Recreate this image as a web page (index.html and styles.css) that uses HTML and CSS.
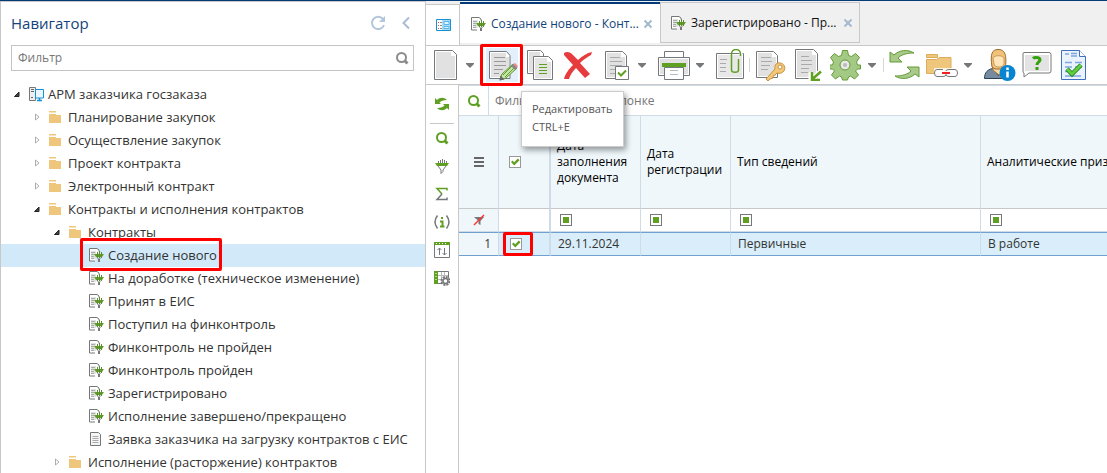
FILE: index.html
```html
<!DOCTYPE html>
<html lang="ru">
<head>
<meta charset="utf-8">
<title>АРМ заказчика госзаказа</title>
<link rel="stylesheet" href="styles.css">
</head>
<body>
<svg class="sprite" aria-hidden="true">
  <symbol id="folder" viewBox="0 0 14 14"><path d="M1 1h7v1.500H1zM1 4h7v1h5v8H1z" fill="#efc77c"/></symbol>
  <symbol id="doc-filter" viewBox="0 0 16 16">
    <path d="M11 4.500V3L9 1.500H1.500v12.500H7" fill="#fff" stroke="#75787b"/>
    <path d="M3 4h5v8H3z" fill="#e2e2e2"/>
    <path d="M3 5.500h4M3 7.500h3M3 9.500h3M3 11.500h3" stroke="#aaa"/>
    <path d="M6 7h10l-2 3H8z" fill="#5fa022"/>
    <path d="M9.500 5v6M11.500 4v7M13.500 5v6" stroke="#5b8b33"/>
    <path d="M9 10.500l1.500 1.500v3M13 10.500L11.500 12v3" fill="none" stroke="#777"/>
  </symbol>
  <symbol id="doc-small" viewBox="0 0 16 16"><path d="M2.500 1.500h8l2 2v11h-10z" fill="#f5f5f5" stroke="#75787b"/><path d="M4.500 5.500h6M4.500 7.500h6M4.500 9.500h6M4.500 11.500h6" stroke="#aaa"/></symbol>
  <symbol id="station" viewBox="0 0 16 16"><path d="M1.500 1.500h6v13h-6z" fill="#eee" stroke="#75787b"/><path d="M3 3.500h3M3 5.500h3M3 11.500h2" stroke="#666"/><path d="M7.500 3.500h8v8.500h-8z" fill="#eaf7ff" stroke="#1590d4"/><path d="M9 14.500h5M11.500 12v2" stroke="#1590d4" stroke-width="1.500"/></symbol>
  <symbol id="open" viewBox="0 0 8 8"><path d="M6 2v4.500H1.500z" fill="#444" stroke="#222"/></symbol>
  <symbol id="shut" viewBox="0 0 8 8"><path d="M2.500 1v6l3.500-3z" fill="#fff" stroke="#999" stroke-width=".8"/></symbol>
  <symbol id="lens" viewBox="0 0 16 16"><circle cx="7.500" cy="7.500" r="4.500" fill="none" stroke="currentColor" stroke-width="2"/><path d="M10.500 10.500l3 3" stroke="currentColor" stroke-width="3"/></symbol>
  <symbol id="cross" viewBox="0 0 10 10"><path d="M1.500 1.500l7 7M8.500 1.500l-7 7" stroke="#a3b9d0" stroke-width="2"/></symbol>
  <symbol id="caret" viewBox="0 0 10 10"><path d="M1 3h8v1L5 8 1 4z" fill="#75787b"/></symbol>
  <symbol id="sync" viewBox="0 0 32 32"><path d="M2 3v10h12l-4-4c3-3 8-5 16-5C20 0 11 1 6 6zM31 28V18H19l4 4c-3 3-8 5-16 5 6 4 15 3 20-2z" fill="#a8c98a" stroke="#639c35"/></symbol>
  <symbol id="sheet" viewBox="0 0 32 32"><path d="M1.500 1.500h18l4 4v25h-22z" fill="#fff" stroke="#75787b"/><path d="M3 3h15v4h4v22H3z" fill="#e1e1e1"/></symbol>
  <symbol id="i-edit" viewBox="0 0 32 32"><path d="M3.500 2.500h17l3.500 4v23H3.500z" fill="#fff" stroke="#75787b"/><path d="M5 4h15v4h3v20H5z" fill="#e1e1e1"/><path d="M8 8.500h11M8 12.500h12M8 16.500h12M8 20.500h9M8 24.500h5" stroke="#999"/><path d="M14 31l2-6L27 15l4 4-11 10z" fill="#c7e5a8" stroke="#5e9c2e"/><path d="M17 26l9-9M19 28l9-9" stroke="#5e9c2e"/><path d="M13.500 31.500l1-5 4 4z" fill="#666"/><path d="M25 17l2-2 4 4-2 2z" fill="#888"/><path d="M27 15l2-1 3 3-1 2z" fill="#f18a96"/></symbol>
  <symbol id="i-copy" viewBox="0 0 32 32"><path d="M3.500 1.500h13l3 3v20h-16z" fill="#fff" stroke="#75787b"/><path d="M5 3h11v20H5z" fill="#e1e1e1"/><path d="M9.500 7.500h15l4 4v19h-19z" fill="#fff" stroke="#75787b"/><path d="M11 9h12v4h4v16H11z" fill="#e4e4e4"/><path d="M15 15.500h8M15 18.500h8M15 21.500h8M15 24.500h8" stroke="#5fa022"/></symbol>
  <symbol id="i-delete" viewBox="0 0 32 32"><path d="M2 4c3-2 6-1 8 1l6 6c4-4 9-7 14-8l-1 3c-4 2-8 5-11 8l10 11-5 4-9-10c-3 3-6 7-7 11H2c1-5 5-10 9-14L2 6z" fill="#e73c3e"/></symbol>
  <symbol id="i-check" viewBox="0 0 32 32"><path d="M5.500 2.500h17l4 4v23h-21z" fill="#fff" stroke="#75787b"/><path d="M7 4h14v4h4v20H7z" fill="#e1e1e1"/><path d="M10 8.500h10M10 12.500h12M10 16.500h12M10 20.500h6M10 24.500h5" stroke="#aaa"/><path d="M15.500 17.500h13v13h-13z" fill="#fff" stroke="#75787b"/><path d="M18 23.500l3 3 5-5" fill="none" stroke="#5fa022" stroke-width="2"/></symbol>
  <symbol id="i-print" viewBox="0 0 32 32"><path d="M6.500 8V2.500h19V8" fill="#fff" stroke="#75787b"/><path d="M.500 8.500h31v18H.500z" fill="#fff" stroke="#75787b"/><path d="M2 10h28v15H2z" fill="#e1e1e1"/><path d="M4 14h24v4H4z" fill="#5fa022"/><path d="M6.500 18.500h19v12h-19z" fill="#fff" stroke="#75787b"/><path d="M12 21.500h8M12 25.500h8" stroke="#bbb"/></symbol>
  <symbol id="i-clip" viewBox="0 0 32 32"><path d="M.500 4.500h27v25H.500z" fill="#fff" stroke="#75787b"/><path d="M2 6h24v22H2z" fill="#e8e8e8"/><path d="M4 10.500h7M4 14.500h6M4 18.500h6M4 22.500h6" stroke="#aaa"/><path d="M15 4V2h10v4" fill="none" stroke="#fff" stroke-width="3"/><path d="M22.500 10v11c0 3-7 3-7 0V5c0-6 9-6 9 0v2M18.500 10v0" fill="none" stroke="#5fa022" stroke-width="1.500"/></symbol>
  <symbol id="i-key" viewBox="0 0 32 32"><path d="M2.500 2.500h17l4 4v22h-21z" fill="#fff" stroke="#75787b"/><path d="M4 4h14v4h4v19H4z" fill="#e1e1e1"/><path d="M7 8.500h10M7 12.500h11M7 16.500h9M7 20.500h7" stroke="#aaa"/><path d="M12 30l9-10c-1-4 2-7 5-6 4 0 6 5 4 8-2 2-4 3-7 2l-2 2-2 1v2l-3 1-2 2z" fill="#f2c878" stroke="#c69243"/><circle cx="26" cy="18" r="2" fill="#fff" stroke="#c69243"/></symbol>
  <symbol id="i-import" viewBox="0 0 32 32"><path d="M3.500.500h18l4 4v25h-22z" fill="#fff" stroke="#75787b"/><path d="M5 2h15v4h4v22H5z" fill="#e1e1e1"/><path d="M9 7.500h8M9 11.500h11M9 15.500h11M9 19.500h8M9 23.500h8" stroke="#aaa"/><path d="M29 22l-9 9M19 23v9h9" fill="none" stroke="#fff" stroke-width="5"/><path d="M29 22.500l-8 7M20 23v8h8" fill="none" stroke="#5fa022" stroke-width="2.500"/></symbol>
  <symbol id="i-gear" viewBox="0 0 32 32"><path d="M12.500 1.500h5l1 5 3 1 4-3 4 4-3 4.500 1 3h3v4l-3 0-2 2 3 4-4 4-4-3-2 1-1 3h-5l-1-3-2-1-4 3-4-4 3-4-2-2-3 0v-4h3l1-3-3-4.500 4-4 4 3 3-1z" fill="#a3c985" stroke="#639c35"/><circle cx="15" cy="16" r="5" fill="#e8e8e8" stroke="#639c35"/><circle cx="15" cy="16" r="2" fill="#bbb"/></symbol>
  <symbol id="i-link" viewBox="0 0 32 32"><path d="M.500 5.500h11v3h-11zM.500 10.500h10l3-2h11.500v16H.500z" fill="#efc77c" stroke="#dcae5c"/><path d="M8 19h24v10H8z" fill="#fff" opacity=".8"/><path d="M17 20.500H11q-2.500 0-2.500 3.500t2.500 3.500h6q3 0 3-2M20 22q0-1.500 3-1.500h6q2.500 0 2.500 3.500t-2.500 3.500h-6q-3 0-3-2" fill="#fff" stroke="#75787b"/><path d="M16 24h8" stroke="#e22" stroke-width="2"/></symbol>
  <symbol id="i-user" viewBox="0 0 32 32"><path d="M.500 29.500c0-6 3-9 8-10l6 7 3-7c6 1 8 5 8 10z" fill="#778ba0" stroke="#2c4257"/><path d="M9 16h10v6l-4 4-6-5z" fill="#f8d9a8" stroke="#a97b39"/><path d="M8 18C6 5 8 .500 14 .500S23 4 21.500 18l-3 2H11z" fill="#f0c27a" stroke="#9b6b2c"/><path d="M9 9c1-3 10-3 11 0v6c-1 4-9 4-10 0z" fill="#ffe5b8" stroke="#b78440" stroke-width=".7"/><circle cx="23.500" cy="24" r="8" fill="#0785d1"/><path d="M23.500 18.500v2.500M23.500 22.500v6" stroke="#fff" stroke-width="2.500"/></symbol>
  <symbol id="i-help" viewBox="0 0 32 32"><path d="M2 3.500h25q2 0 2 2V22q0 2-2 2H7l-5 4V24q-1 0-1-2V5q0-1.500 1-1.500z" fill="#fff" stroke="#75787b"/><path d="M3 6h24v16H3z" fill="#e3e3e3"/><path d="M11 9.500q1-1 3-1 4 0 4 2.500c0 2-3 2-3 5M15 18v3" fill="none" stroke="#35a010" stroke-width="3"/></symbol>
  <symbol id="i-report" viewBox="0 0 32 32"><path d="M1.500 1.500h18l6 6v23h-24z" fill="#eaf2fd" stroke="#416fc0"/><path d="M19.500 1.500v6h6" fill="#fff" stroke="#416fc0"/><path d="M5 5h4M11 4.500h6M11 7h6M5 13.500h7M15 13.500h7M5 18h7M5 22.500h6M15 18h7M5 27h16" stroke="#7ca7e0" stroke-width="1.500"/><path d="M7 20l5 5 9-9" fill="none" stroke="#247b1d" stroke-width="4.500"/><path d="M7 20l5 5 9-9" fill="none" stroke="#60cf40" stroke-width="3"/></symbol>
</svg>
<div class="app">
  <nav class="navigator" aria-label="Навигатор">
    <header class="nav-head"><h1>Навигатор</h1>
      <button aria-label="Обновить"><svg class="nav-icon" viewBox="0 0 16 16"><path d="M13 4A6.200 6.200 0 1 0 14 10" fill="none" stroke="#b3c5d9" stroke-width="2"/><path d="M15 1v6H9z" fill="#b3c5d9"/></svg></button>
      <button aria-label="Свернуть"><svg class="nav-icon" viewBox="0 0 16 16"><path d="M11 2.500L5.500 8l5.500 5.500" fill="none" stroke="#a8bcd3" stroke-width="2"/></svg></button>
    </header>
    <div class="nav-filter"><input type="text" placeholder="Фильтр" aria-label="Фильтр"><svg class="i16"><use href="#lens"/></svg></div>
    <ul class="tree">
      <li><a href="#arm"><svg class="arrow"><use href="#open"/></svg><svg class="i16"><use href="#station"/></svg>АРМ заказчика госзаказа</a>
        <ul class="level-2">
          <li><a href="#plan"><svg class="arrow"><use href="#shut"/></svg><svg class="i14"><use href="#folder"/></svg>Планирование закупок</a></li>
          <li><a href="#buy"><svg class="arrow"><use href="#shut"/></svg><svg class="i14"><use href="#folder"/></svg>Осуществление закупок</a></li>
          <li><a href="#project"><svg class="arrow"><use href="#shut"/></svg><svg class="i14"><use href="#folder"/></svg>Проект контракта</a></li>
          <li><a href="#electronic"><svg class="arrow"><use href="#shut"/></svg><svg class="i14"><use href="#folder"/></svg>Электронный контракт</a></li>
          <li><a href="#contracts"><svg class="arrow"><use href="#open"/></svg><svg class="i14"><use href="#folder"/></svg>Контракты и исполнения контрактов</a>
            <ul class="level-3">
              <li><a href="#list"><svg class="arrow"><use href="#open"/></svg><svg class="i14"><use href="#folder"/></svg>Контракты</a>
                <ul class="level-4">
                  <li><a class="selected" href="#new"><span class="marked"><svg class="i16"><use href="#doc-filter"/></svg>Создание нового</span></a></li>
                  <li><a href="#rework"><svg class="i16"><use href="#doc-filter"/></svg>На доработке (техническое изменение)</a></li>
                  <li><a href="#accepted"><svg class="i16"><use href="#doc-filter"/></svg>Принят в ЕИС</a></li>
                  <li><a href="#received"><svg class="i16"><use href="#doc-filter"/></svg>Поступил на финконтроль</a></li>
                  <li><a href="#failed"><svg class="i16"><use href="#doc-filter"/></svg>Финконтроль не пройден</a></li>
                  <li><a href="#passed"><svg class="i16"><use href="#doc-filter"/></svg>Финконтроль пройден</a></li>
                  <li><a href="#registered"><svg class="i16"><use href="#doc-filter"/></svg>Зарегистрировано</a></li>
                  <li><a href="#finished"><svg class="i16"><use href="#doc-filter"/></svg>Исполнение завершено/прекращено</a></li>
                  <li><a href="#request"><svg class="i16"><use href="#doc-small"/></svg>Заявка заказчика на загрузку контрактов с ЕИС</a></li>
                </ul>
              </li>
              <li><a href="#execution"><svg class="arrow"><use href="#shut"/></svg><svg class="i14"><use href="#folder"/></svg>Исполнение (расторжение) контрактов</a></li>
            </ul>
          </li>
        </ul>
      </li>
    </ul>
  </nav>
  <main class="work">
    <div class="tabs">
      <button class="home" aria-label="Рабочий стол"><svg class="i16" viewBox="0 0 16 16"><path d="M1.500 2.500h14v11h-14z" fill="#a9dcf8" stroke="#1590d4"/><path d="M2 3h5v10H2z" fill="#fff"/><path d="M3 5.500h1M3 8.500h1M3 11.500h1" stroke="#e55"/><path d="M5 5.500h2M5 8.500h2M5 11.500h2" stroke="#888"/><path d="M9 4.500h5v3H9zM9 9.500h5v2H9z" fill="#e3f5ff" stroke="#58b7e8"/></svg></button>
      <div class="tab active"><a href="#new"><svg class="i16"><use href="#doc-filter"/></svg>Создание нового - Конт...</a><button aria-label="Закрыть"><svg class="i10"><use href="#cross"/></svg></button></div>
      <div class="tab"><a href="#registered"><svg class="i16"><use href="#doc-filter"/></svg>Зарегистрировано - Пр...</a><button aria-label="Закрыть"><svg class="i10"><use href="#cross"/></svg></button></div>
    </div>
    <div class="toolbar">
      <button class="tool" aria-label="Создать"><svg class="i32" viewBox="-5 0 32 32"><use href="#sheet" width="32" height="32"/></svg></button><button class="more" aria-label="Варианты создания"><svg class="i10"><use href="#caret"/></svg></button>
      <button class="tool current" aria-label="Редактировать"><svg class="i32"><use href="#i-edit"/></svg></button>
      <button class="tool" aria-label="Копировать"><svg class="i32"><use href="#i-copy"/></svg></button>
      <button class="tool" aria-label="Удалить"><svg class="i32"><use href="#i-delete"/></svg></button>
      <button class="tool" aria-label="Проверить"><svg class="i32"><use href="#i-check"/></svg></button><button class="more" aria-label="Варианты проверки"><svg class="i10"><use href="#caret"/></svg></button>
      <button class="tool" aria-label="Печать"><svg class="i32"><use href="#i-print"/></svg></button><button class="more" aria-label="Варианты печати"><svg class="i10"><use href="#caret"/></svg></button>
      <button class="tool" aria-label="Вложения"><svg class="i32"><use href="#i-clip"/></svg></button><span class="sep"></span>
      <button class="tool" aria-label="Подписать"><svg class="i32"><use href="#i-key"/></svg></button>
      <button class="tool" aria-label="Импорт"><svg class="i32"><use href="#i-import"/></svg></button>
      <button class="tool" aria-label="Действия"><svg class="i32"><use href="#i-gear"/></svg></button><button class="more" aria-label="Все действия"><svg class="i10"><use href="#caret"/></svg></button><span class="sep"></span>
      <button class="tool" aria-label="Обновить"><svg class="i32"><use href="#sync"/></svg></button>
      <button class="tool" aria-label="Связи"><svg class="i32"><use href="#i-link"/></svg></button><button class="more" aria-label="Все связи"><svg class="i10"><use href="#caret"/></svg></button>
      <button class="tool" aria-label="Пользователь"><svg class="i32"><use href="#i-user"/></svg></button>
      <button class="tool" aria-label="Справка"><svg class="i32"><use href="#i-help"/></svg></button>
      <button class="tool" aria-label="Отчёт"><svg class="i32"><use href="#i-report"/></svg></button>
      <div class="tooltip" role="tooltip">Редактировать<br>CTRL+E</div>
    </div>
    <div class="body">
      <div class="side">
        <button aria-label="Обновить список"><svg class="i16" viewBox="0 0 16 16"><path d="M1 2v6h6L5.500 6.500C7 5 9 4 13 4 10 1 6 1 3 4zM15 14V8H9l1.500 1.500C9 11 7 12 3 12c3 3 7 3 10 0z" fill="#5fa022"/></svg></button>
        <hr>
        <button class="green" aria-label="Поиск"><svg class="i16"><use href="#lens"/></svg></button>
        <button aria-label="Фильтр"><svg class="i16" viewBox="0 0 16 16"><path d="M4.500 3v3M6.500 2v4M8.500 1v5M10.500 2v4M12.500 3v3" stroke="#777"/><path d="M1 5h14l-2 3H3z" fill="#5fa022"/><path d="M4 8l3 4v3.500l2-2V12l3-4" fill="none" stroke="#75787b"/></svg></button>
        <button aria-label="Сумма"><svg class="i16" viewBox="0 0 16 16"><path d="M13 4.500V2.500H3l5 5.500" fill="none" stroke="#5fa022" stroke-width="1.500"/><path d="M8 8l-5 5.500h10v-2" fill="none" stroke="#75787b" stroke-width="1.500"/></svg></button>
        <button aria-label="Информация"><svg class="i16" viewBox="0 0 16 16"><path d="M3.500 1.500q-5 6.500 0 13M12.500 1.500q5 6.500 0 13" fill="none" stroke="#75787b" stroke-width="1.500"/><path d="M8 3v2M6 7.500h2.500V13M6 12.500h4.500" fill="none" stroke="#5fa022" stroke-width="2"/></svg></button>
        <button aria-label="Сортировка"><svg class="i16" viewBox="0 0 16 16"><path d="M.500 2.500h15v13H.500z" fill="#fff" stroke="#75787b"/><path d="M0 0h16v3H0z" fill="#5fa022"/><path d="M2 1.500h12" stroke="#fff" stroke-dasharray="1 2"/><path d="M5.500 13V6M3.500 8l2-2 2 2M10.500 6v7M8.500 11l2 2 2-2" fill="none" stroke="#75787b"/></svg></button>
        <button aria-label="Настройка колонок"><svg class="i16" viewBox="0 0 16 16"><path d="M.500 1.500h14v12H.500z" fill="#fff" stroke="#75787b"/><path d="M1 5.500h13M1 9.500h13M7.500 2v11M10.500 2v11" stroke="#bbb"/><path d="M0 1h4v13H0z" fill="#5fa022"/><path d="M1 3.500h2M1 6.500h2M1 9.500h2" stroke="#b4da91"/><circle cx="11.500" cy="11" r="4" fill="#fff" stroke="#75787b" stroke-width="2" stroke-dasharray="2.100 1"/><circle cx="11.500" cy="11" r="2.500" fill="#fff" stroke="#75787b" stroke-width="1.500"/></svg></button>
      </div>
      <section class="grid">
        <div class="search"><button class="green" aria-label="Найти"><svg class="i16"><use href="#lens"/></svg></button><input type="text" placeholder="Фильтр по каждой колонке" aria-label="Фильтр по колонке"></div>
        <table>
          <colgroup><col class="c-num"><col class="c-check"><col class="c-date"><col class="c-date"><col class="c-type"><col></colgroup>
          <thead>
            <tr class="titles"><th><button aria-label="Меню"><svg class="i12" viewBox="0 0 12 12"><path d="M1 2h10M1 6h10M1 10h10" stroke="#666" stroke-width="2"/></svg></button></th><th><input type="checkbox" checked aria-label="Выбрать все"></th><th>Дата заполнения документа</th><th>Дата регистрации</th><th>Тип сведений</th><th>Аналитические признаки</th></tr>
            <tr class="filters"><td><button aria-label="Сбросить фильтр"><svg class="i12" viewBox="0 0 12 12"><path d="M1 3h10L7.500 7v4l-2-1V7z" fill="#75787b"/><path d="M1 11L11 1" stroke="#f33" stroke-width="1.500"/></svg></button></td><td></td><td><button class="cond" aria-label="Условие"></button></td><td><button class="cond" aria-label="Условие"></button></td><td><button class="cond" aria-label="Условие"></button></td><td><button class="cond" aria-label="Условие"></button></td></tr>
          </thead>
          <tbody><tr class="record"><td>1</td><td><label class="framed"><input type="checkbox" checked aria-label="Выбрать строку 1"></label></td><td>29.11.2024</td><td></td><td>Первичные</td><td>В работе</td></tr></tbody>
        </table>
      </section>
    </div>
  </main>
</div>
</body>
</html>
```

FILE: styles.css
```css
* { box-sizing: border-box; }
body { margin: 0; font: 13px/16px "Open Sans", "Noto Sans", sans-serif; color: #333; background: #fff; overflow: hidden; }
button { border: 0; padding: 0; background: none; font: inherit; color: inherit; display: flex; align-items: center; justify-content: center; }
input { font: inherit; }
a { color: inherit; text-decoration: none; }
ul { list-style: none; margin: 0; padding: 0; }
svg { display: block; flex: none; }
.sprite { position: absolute; width: 0; height: 0; }
.i10 { width: 10px; height: 10px; }
.i12 { width: 12px; height: 12px; }
.i14 { width: 14px; height: 14px; }
.i16 { width: 16px; height: 16px; }
.i32 { width: 32px; height: 32px; }
.green { color: #5fa022; }

.app { display: flex; min-height: 100vh; border-top: 1px solid #043a78; }

.navigator { flex: 0 0 426px; border: 1px solid #c8c8c8; border-bottom: 0; height: calc(100vh - 1px); overflow: hidden; }
.nav-head { display: flex; align-items: center; gap: 12px; height: 43px; padding: 0 11px 2px 10px; }
.nav-head h1 { flex: 1; margin: 0; font-size: 15px; line-height: 20px; font-weight: 400; color: #14427a; }
.nav-icon { width: 16px; height: 16px; }
.nav-filter { display: flex; align-items: center; height: 26px; margin: 0 11px 12px 10px; padding: 0 3px 0 6px; border: 1px solid #c4c4c4; color: #8b8b8b; }
.nav-filter input { flex: 1; min-width: 0; border: 0; outline: 0; padding: 0; font-size: 12px; }
input::placeholder { color: #777; opacity: 1; }

.tree a { display: flex; align-items: center; height: 23px; padding: 0 0 2px 12px; white-space: nowrap; }
.arrow { width: 8px; height: 8px; margin-right: 7px; }
.tree .i16, .tree .i14 { margin-right: 4px; }
.tree .level-2 a { padding-left: 32px; }
.tree .level-2 .i14 { margin-right: 6px; }
.tree .level-3 a { padding-left: 52px; }
.tree .level-4 a { padding-left: 87px; }
.tree .selected { background: #d1e9f9; }
.marked { position: relative; display: flex; align-items: center; }
.marked::after { content: ""; position: absolute; inset: -9px -5px -8px -8px; border: 3px solid #f00; border-radius: 2px; }

.work { flex: 1; min-width: 0; display: flex; flex-direction: column; }
.tabs { display: flex; height: 45px; padding: 1px 0 2px; background: #f0f0f0; border-bottom: 1px solid #c8c8c8; font-size: 12px; }
.home { width: 34px; margin: 2px 0 -2px; background: #fff; border: 1px solid #c8c8c8; border-width: 1px 1px 0 0; }
.tab { display: flex; align-items: center; justify-content: space-between; flex: 0 1 200px; padding: 0 6px 0 9px; border: 1px solid #c8c8c8; color: #111; }
.tab a { display: flex; align-items: center; gap: 5px; white-space: nowrap; }
.tab.active { padding: 0 7px 0 10px; background: #fff; color: #14427a; border: 0; border-top: 2px solid #043a78; }

.toolbar { position: relative; display: flex; align-items: center; height: 39px; padding: 0 0 0 2px; border-bottom: 1px solid #c8c8c8; }
.tool { position: relative; flex: none; width: 32px; height: 34px; margin-left: 6px; }
.tool:first-child { margin-left: 0; }
.more { width: 20px; height: 34px; }
.sep { width: 1px; height: 14px; margin-left: 1px; background: #d6d6d6; }
.sep + .tool { margin-left: 4px; }
.current { background: #e3effa; }
.current::after { content: ""; position: absolute; z-index: 1; inset: -4px -5px -4px -6px; border: 3px solid #f00; border-radius: 2px; }
.tooltip { position: absolute; z-index: 3; left: 95px; top: 45px; padding: 8px 10px 10px; border: 1px solid #ccc; background: #fff; box-shadow: 2px 3px 6px #0006; color: #555; font-size: 11px; line-height: 18px; white-space: nowrap; }

.body { flex: 1; display: flex; }
.side { flex: 0 0 33px; display: flex; flex-direction: column; padding-top: 5px; border-right: 1px solid #c8c8c8; }
.side button { height: 28px; }
.side hr { width: 24px; height: 1px; margin: 5px auto 0; border: 0; background: #c8c8c8; }
.grid { flex: 1; min-width: 0; overflow: hidden; border-top: 1px solid #d0dbe6; }
.search { display: flex; height: 30px; border-bottom: 1px solid #cfdbe6; }
.search button { width: 30px; border-right: 1px solid #cfdbe6; }
.search input { flex: 1; min-width: 0; border: 0; outline: 0; padding: 0 6px; font-size: 12px; }

table { width: 100%; table-layout: fixed; border-collapse: separate; border-spacing: 0; }
.c-num { width: 40px; }
.c-check { width: 52px; }
.c-date { width: 90px; }
.c-type { width: 250px; }
th, td { padding: 0 6px; border-right: 1px solid #cfdbe6; text-align: left; font-weight: 400; vertical-align: middle; }
th:last-child, td:last-child { border-right: 0; white-space: nowrap; overflow: hidden; }
th:nth-child(2), td:nth-child(2) { border-right-width: 2px; padding: 0 10px; }
th:first-child button, .filters td:first-child button { margin: 0 auto; }
.titles th { height: 93px; background: #eff7fb; border-bottom: 1px solid #c8c8c8; color: #000; font-size: 12px; line-height: 16px; }
.filters td { height: 23px; border-bottom: 1px solid #cfdbe6; }
.filters td:first-child { background: #eff7fb; }
.cond { width: 12px; height: 12px; margin-left: 3px; border: 1px solid #75787b; background: #5fa022; box-shadow: inset 0 0 0 2px #fff; }
.record td { height: 24px; padding: 0 7px; background: #d9eefa; border-top: 1px solid #6fa0cf; border-bottom: 1px solid #6fa0cf; font-size: 12px; }
.record td:first-child { background: #eff7fb; text-align: right; }
.record td:nth-child(2) { padding-left: 11px; }
input[type="checkbox"] { appearance: none; display: block; width: 12px; height: 12px; margin: 0; border: 1px solid #999; background: #fff; }
input[type="checkbox"]:checked::before { content: ""; display: block; width: 10px; height: 10px; background: #5fa022; clip-path: polygon(10% 50%, 25% 35%, 42% 52%, 78% 16%, 95% 32%, 42% 84%); }
.framed { position: relative; display: block; width: 12px; }
.framed::after { content: ""; position: absolute; inset: -6px -11px -6px -7px; border: 3px solid #f00; border-radius: 2px; }
```
